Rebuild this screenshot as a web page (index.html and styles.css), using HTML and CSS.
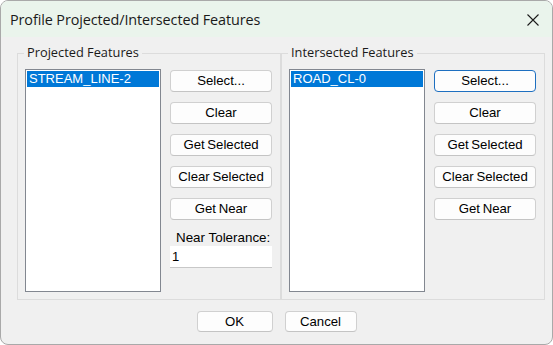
FILE: index.html
```html
<!DOCTYPE html>
<html>
<head>
<meta charset="utf-8">
<link rel="stylesheet" href="styles.css">
</head>
<body>
<div class="window">
  <div class="titlebar">
    <span class="title">Profile Projected/Intersected Features</span>
    <svg class="close" width="12" height="12" viewBox="0 0 12 12"><path d="M0.5 0.5 L11.5 11.5 M11.5 0.5 L0.5 11.5" stroke="#1b1b1b" stroke-width="1.1" fill="none"/></svg>
  </div>
  <div class="main">
    <div class="groups">
      <div class="group">
        <div class="legend">Projected Features</div>
        <div class="group-body">
          <div class="listbox"><div class="item">STREAM_LINE-2</div></div>
          <div class="buttons">
            <div class="btn">Select...</div>
            <div class="btn">Clear</div>
            <div class="btn">Get Selected</div>
            <div class="btn">Clear Selected</div>
            <div class="btn">Get Near</div>
            <div class="tol">
              <div class="tol-label">Near Tolerance:</div>
              <div class="tol-input">1</div>
            </div>
          </div>
        </div>
      </div>
      <div class="group">
        <div class="legend">Intersected Features</div>
        <div class="group-body">
          <div class="listbox"><div class="item">ROAD_CL-0</div></div>
          <div class="buttons">
            <div class="btn focused">Select...</div>
            <div class="btn">Clear</div>
            <div class="btn">Get Selected</div>
            <div class="btn">Clear Selected</div>
            <div class="btn">Get Near</div>
          </div>
        </div>
      </div>
    </div>
  </div>
  <div class="actions">
    <div class="btn ok">OK</div>
    <div class="btn cancel">Cancel</div>
  </div>
</div>
</body>
</html>
```

FILE: styles.css
```css
* { box-sizing: border-box; }
html, body { margin: 0; padding: 0; background: #ffffff; }
.window {
  width: 553px;
  height: 345px;
  border: 1px solid #a9a9a9;
  border-radius: 8px;
  overflow: hidden;
  background: #f0f0f0;
  font-family: "Liberation Sans", Arial, sans-serif;
  color: #000;
}
.titlebar {
  height: 36px;
  background: #eaf4ec;
  display: flex;
  align-items: center;
  justify-content: space-between;
  padding: 0 13px 0 9px;
}
.title {
  font-family: "Open Sans", "Noto Sans", sans-serif;
  font-size: 14.4px;
  letter-spacing: -0.1px;
  color: #1a1a1a;
  padding-top: 1px;
}
.close { display: block; margin-top: 1px; }
.main { padding: 16px 0 0 16px; }
.groups { display: flex; }
.group {
  width: 264px;
  height: 247px;
  border: 1px solid #dcdcdc;
  padding: 0 8px 0 7px;
}
.legend {
  width: fit-content;
  height: 16px;
  line-height: 16px;
  margin-top: -10px;
  margin-left: -1px;
  padding: 0 3px;
  background: #f0f0f0;
  font-family: "Open Sans", "Noto Sans", sans-serif;
  font-size: 12.8px;
  color: #1a1a1a;
  white-space: nowrap;
}
.group-body { display: flex; margin-top: 9px; }
.listbox {
  width: 136px;
  height: 223px;
  border: 1px solid #828790;
  background: #ffffff;
  padding: 1px;
}
.item {
  height: 16px;
  line-height: 16px;
  background: #0078d7;
  color: #ffffff;
  padding-left: 2px;
  font-size: 13px;
  white-space: nowrap;
}
.buttons {
  width: 102px;
  margin-left: 9px;
  margin-top: 1px;
  display: flex;
  flex-direction: column;
  gap: 10px;
}
.btn {
  height: 22px;
  line-height: 20px;
  border: 1px solid #d0d0d0;
  border-bottom-color: #c4c4c4;
  border-radius: 4px;
  background: #fdfdfd;
  text-align: center;
  font-size: 13.2px;
  word-spacing: -1px;
  white-space: nowrap;
}
.btn.focused { border-color: #1d6fc0; }
.tol-label {
  height: 16px;
  line-height: 16px;
  padding-left: 6px;
  font-size: 13.4px;
  white-space: nowrap;
}
.tol-input {
  width: 102px;
  height: 22px;
  line-height: 22px;
  background: #ffffff;
  border-bottom: 1px solid #c8c8c8;
  padding-left: 2px;
  font-size: 13px;
}
.actions {
  display: flex;
  justify-content: center;
  gap: 12px;
  margin-top: 11px;
}
.actions .btn { height: 21px; line-height: 19px; }
.ok { width: 76px; }
.cancel { width: 72px; }
```
